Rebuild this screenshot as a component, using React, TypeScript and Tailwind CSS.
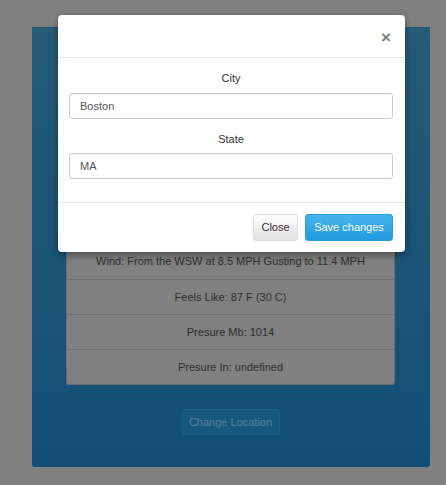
const ROWS = [
  "Wind: From the WSW at 8.5 MPH Gusting to 11.4 MPH",
  "Feels Like: 87 F (30 C)",
  "Presure Mb: 1014",
  "Presure In: undefined",
];

export default function App() {
  return (
    <div
      className="relative min-h-[485px] w-[446px] overflow-hidden bg-[#808080] pt-[27px] text-[11px] text-[#333]"
      style={{ fontFamily: '"Liberation Sans", Arial, sans-serif' }}
    >
      {/* page behind the backdrop */}
      <div className="ml-[32px] h-[440px] w-[398px] rounded-b-[3px] bg-[linear-gradient(to_bottom,#275b77,#114f76)] pl-[34px] pr-[35px] pt-[217px]">
        <ul className="rounded-b-[3px] border-x border-b border-[#707070] bg-[#808080]">
          {ROWS.map((r, i) => (
            <li
              key={r}
              className={
                "flex h-[35px] items-center justify-center text-[#2e2e2e] " +
                (i > 0 ? "border-t border-[#6f6f6f]" : "")
              }
            >
              {r}
            </li>
          ))}
        </ul>
        <hr className="mt-[11px] border-t border-[#1b4c6a]" />
        <div className="mt-[12px] flex justify-center">
          <button className="h-[26px] w-[98px] rounded-[3px] border border-[#1d5e84] bg-[#17587e] text-[#55809b]">
            Change Location
          </button>
        </div>
      </div>

      {/* modal */}
      <div className="absolute left-[58px] top-[15px] w-[347px] rounded-[4px] bg-white shadow-[0_3px_9px_rgba(0,0,0,0.4)]">
        <div className="flex h-[43px] items-center justify-end border-b border-[#e5e5e5] pr-[14px] pt-[2px]">
          <span className="text-[17px] font-bold leading-none text-[#808080]">×</span>
        </div>
        <div className="pb-[23px] pl-[11px] pr-[12px] pt-[12px]">
          <label className="block text-center leading-[16px]">City</label>
          <div className="mt-[7px] flex h-[26px] items-center rounded-[3px] border border-[#ccc] px-[10px] text-[#555] shadow-[inset_0_1px_1px_rgba(0,0,0,0.075)]">
            Boston
          </div>
          <label className="mt-[12px] block text-center leading-[16px]">State</label>
          <div className="mt-[6px] flex h-[26px] items-center rounded-[3px] border border-[#ccc] px-[10px] text-[#555] shadow-[inset_0_1px_1px_rgba(0,0,0,0.075)]">
            MA
          </div>
        </div>
        <div className="flex justify-end gap-[7px] border-t border-[#e5e5e5] pb-[11px] pl-[11px] pr-[12px] pt-[11px]">
          <button className="h-[27px] w-[45px] rounded-[3px] border border-[#ddd] bg-[linear-gradient(to_bottom,#fff,#e0e0e0)] text-[#333]">
            Close
          </button>
          <button className="h-[27px] w-[88px] rounded-[3px] border border-[#2a9fd8] bg-[linear-gradient(to_bottom,#46b4ec,#229bde)] text-white">
            Save changes
          </button>
        </div>
      </div>
    </div>
  );
}
